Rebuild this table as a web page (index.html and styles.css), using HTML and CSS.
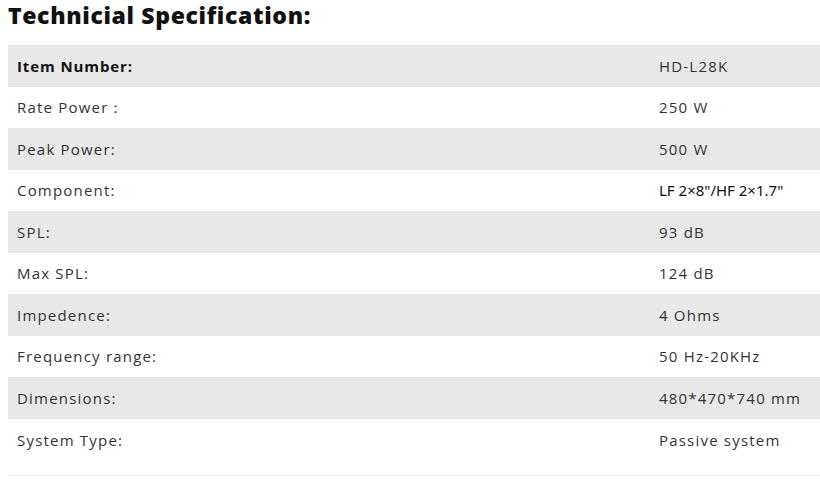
FILE: index.html
```html
<!DOCTYPE html>
<html>
<head>
<meta charset="utf-8">
<link rel="stylesheet" href="styles.css">
</head>
<body>
<div class="spec">
  <h2 class="spec-title">Technicial Specification:</h2>
  <table class="spec-table">
    <tbody>
      <tr class="odd"><td class="label"><b>Item Number:</b></td><td class="value">HD-L28K</td></tr>
      <tr><td class="label">Rate Power：</td><td class="value">250 W</td></tr>
      <tr class="odd"><td class="label">Peak Power:</td><td class="value">500 W</td></tr>
      <tr><td class="label">Component:</td><td class="value"><span class="alt">LF 2×8"/HF 2×1.7"</span></td></tr>
      <tr class="odd"><td class="label">SPL:</td><td class="value">93 dB</td></tr>
      <tr><td class="label">Max SPL:</td><td class="value">124 dB</td></tr>
      <tr class="odd"><td class="label">Impedence:</td><td class="value">4 Ohms</td></tr>
      <tr><td class="label">Frequency range:</td><td class="value">50 Hz-20KHz</td></tr>
      <tr class="odd"><td class="label">Dimensions:</td><td class="value">480*470*740 mm</td></tr>
      <tr class="last"><td class="label">System Type:</td><td class="value">Passive system</td></tr>
    </tbody>
  </table>
</div>
</body>
</html>
```

FILE: styles.css
```css
html, body {
  margin: 0;
  padding: 0;
  background: #fff;
}
body {
  padding: 0 0 0 8px;
  font-family: "Open Sans", "Liberation Sans", sans-serif;
  color: #333;
  overflow: hidden;
}
.spec {
  width: 830px;
}
.spec-title {
  margin: 0;
  height: 45px;
  font-size: 23px;
  font-weight: 800;
  line-height: 30px;
  color: #111;
  letter-spacing: 0.65px;
}
.spec-table {
  width: 100%;
  border-collapse: collapse;
  border-bottom: 1px solid #ececec;
}
.spec-table td {
  height: 41.5px;
  padding: 0 9px;
  font-size: 15px;
  line-height: 20px;
  vertical-align: middle;
  letter-spacing: 1.2px;
}
.spec-table tr.odd td {
  background: #e8e8e8;
}
.spec-table td.label {
  width: 624px;
}
.spec-table tr.last td {
  height: 45px;
  vertical-align: top;
  padding-top: 11px;
}
.spec-table b {
  font-weight: 700;
  color: #111;
  letter-spacing: 0.9px;
}
.alt {
  font-family: "Noto Sans", "Open Sans", sans-serif;
  font-size: 15px;
  color: #111;
  letter-spacing: 0;
}
```
